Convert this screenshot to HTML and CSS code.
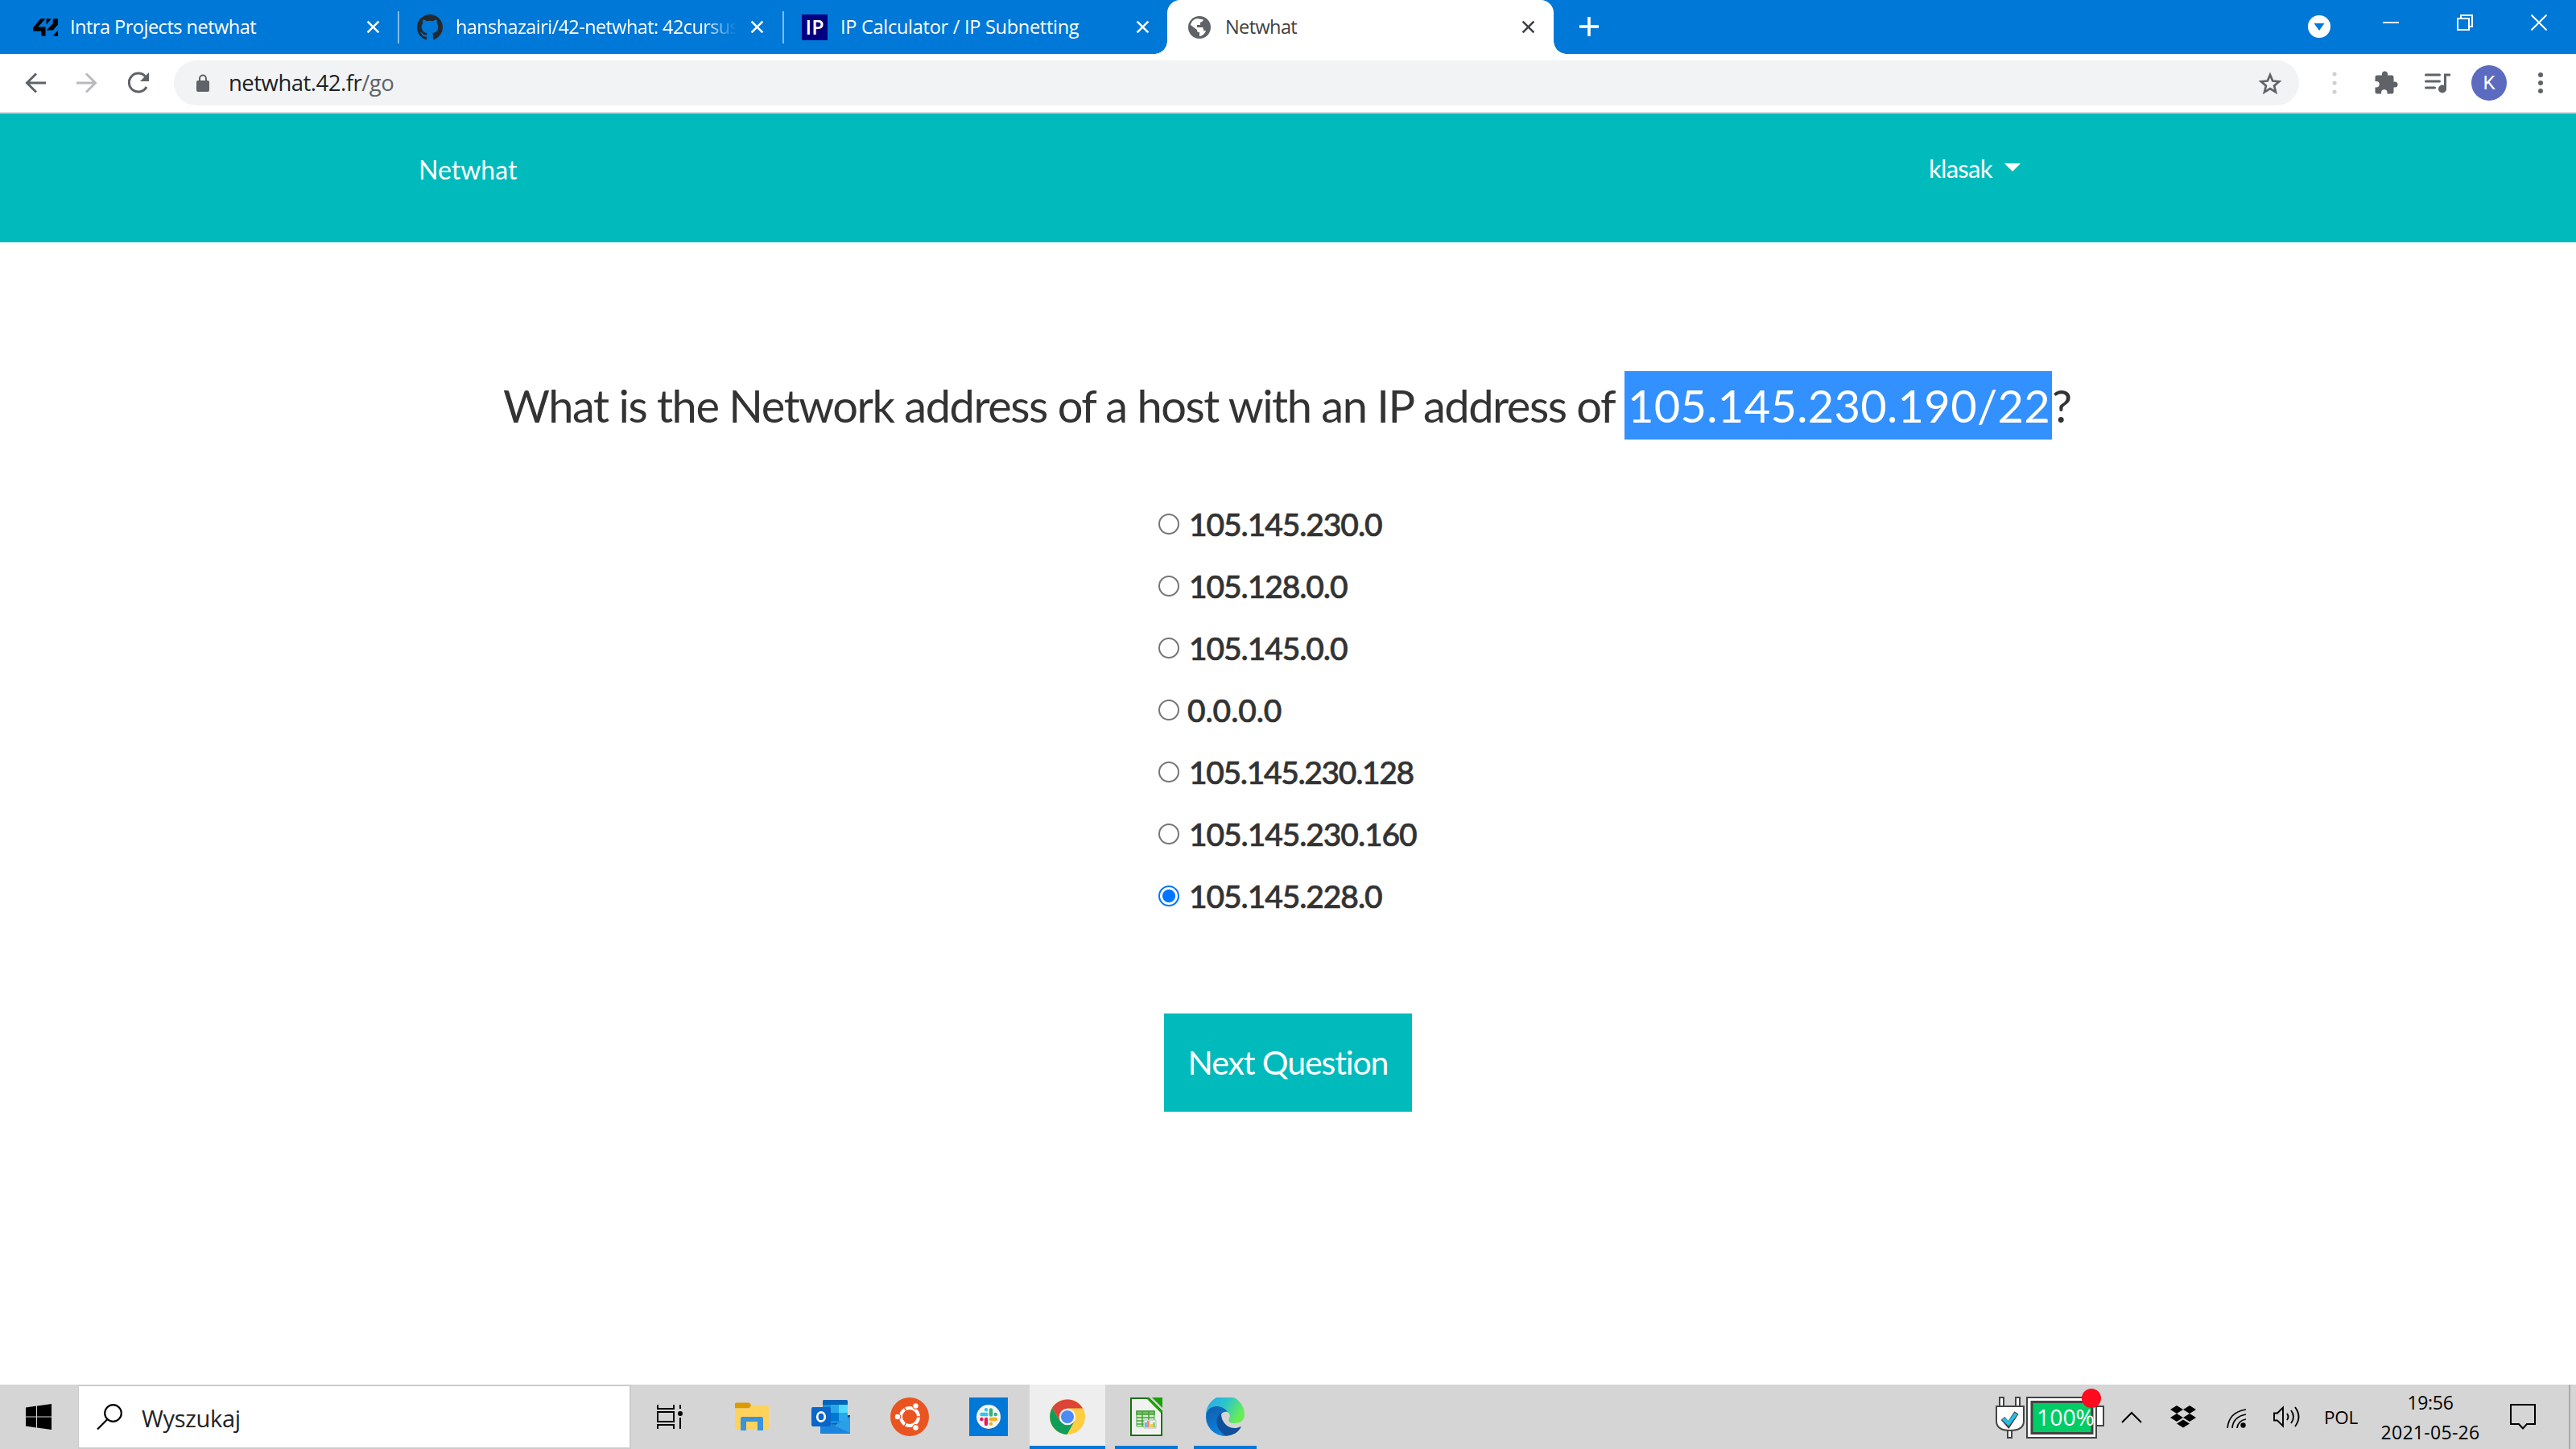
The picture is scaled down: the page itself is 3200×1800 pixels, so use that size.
FILE: index.html
```html
<!DOCTYPE html>
<html lang="pl">
<head>
<meta charset="utf-8">
<title>Netwhat</title>
<link rel="stylesheet" href="styles.css">
</head>
<body>
<div class="screen">
  <div class="tabstrip">
    <div class="tab tab-first">
      <svg class="fav42" viewBox="0 0 30 21"><path d="M9 0h6L6 10h9v11h-5v-6H0v-4zM16 0h6l-6 7zM24 0h6v7l-6 7h-8l8-8zM30 14v7h-6z" fill="#000"/></svg>
      <span class="tab-title t1">Intra Projects netwhat</span>
      <svg class="x" viewBox="0 0 16 16"><path d="M1.5 1.5l13 13M14.500 1.500l-13 13"/></svg>
    </div>
    <div class="tab tab-second">
      <svg class="icon32" viewBox="0 0 16 16"><path fill="#24292e" d="M8 0C3.580 0 0 3.580 0 8c0 3.540 2.290 6.530 5.470 7.590.4.070.55-.17.55-.38 0-.19-.01-.82-.01-1.490-2.010.37-2.530-.49-2.690-.94-.09-.23-.48-.94-.82-1.130-.28-.15-.68-.52-.01-.53.63-.01 1.080.58 1.230.82.72 1.210 1.870.87 2.330.66.070-.52.28-.87.51-1.070-1.780-.2-3.640-.89-3.640-3.950 0-.87.31-1.590.82-2.150-.08-.2-.36-1.020.08-2.120 0 0 .67-.21 2.200.82A7.600 7.600 0 0 1 8 3.860c.68 0 1.360.09 2 .27 1.530-1.040 2.200-.82 2.200-.82.44 1.100.16 1.920.08 2.120.51.56.82 1.270.82 2.150 0 3.070-1.870 3.750-3.650 3.950.29.25.54.73.54 1.480 0 1.070-.01 1.930-.01 2.200 0 .21.15.46.55.38A8.010 8.010 0 0 0 16 8c0-4.420-3.580-8-8-8z"/></svg>
      <span class="tab-title t2">hanshazairi/42-netwhat: 42cursus</span>
      <svg class="x" viewBox="0 0 16 16"><path d="M1.500 1.500l13 13M14.500 1.500l-13 13"/></svg>
    </div>
    <div class="tab tab-third">
      <span class="fav-ip">IP</span>
      <span class="tab-title t3">IP Calculator / IP Subnetting</span>
      <svg class="x" viewBox="0 0 16 16"><path d="M1.500 1.500l13 13M14.500 1.500l-13 13"/></svg>
    </div>
    <div class="tab tab-active">
      <svg class="globe" viewBox="0 0 28 28"><circle cx="14" cy="14" r="14" fill="#5f6368"/><path fill="#fff" d="M12 3c2 1 5 .5 7 1.500-1 2-2 2.500-4 3.500v3h-4v3h7c1 1 1 2 1 4h3c-1 3.500-4 6.500-8 7v-5h-2c-1-1-1-2-1-3l-8-6c1-5 5-8 9-8z"/></svg>
      <span class="tab-title t4">Netwhat</span>
      <svg class="x dark" viewBox="0 0 16 16"><path d="M1.500 1.500l13 13M14.500 1.500l-13 13"/></svg>
    </div>
    <svg class="plus" viewBox="0 0 24 24"><path d="M12 0v24M0 12h24" stroke="#fff" stroke-width="3.600"/></svg>
    <div class="window-controls">
      <svg class="w-down" viewBox="0 0 28 28"><circle cx="14" cy="14" r="14" fill="#fff"/><path d="M7.500 10h13L14 19z" fill="#0078d7"/></svg>
      <svg class="w-btn" viewBox="0 0 20 20"><path d="M0 10h20"/></svg>
      <svg class="w-btn" viewBox="0 0 20 20"><path d="M1 5h14v14H1zM5 5V1h14v14h-4"/></svg>
      <svg class="w-btn" viewBox="0 0 20 20"><path d="M.5.5l19 19M19.500.5l-19 19"/></svg>
    </div>
  </div>

  <div class="toolbar">
    <svg class="nav back" viewBox="0 0 26 26"><path d="M26 13H3M14 1.500L2.500 13 14 24.500"/></svg>
    <svg class="nav forward" viewBox="0 0 26 26"><path d="M0 13h23M12 1.500L23.500 13 12 24.500"/></svg>
    <svg class="nav reload" viewBox="0 0 28 28"><path d="M24 19A11.500 11.500 0 1 1 22.500 6"/><path d="M27 1v11H16z" fill="#5f6368" stroke="none"/></svg>
    <div class="omnibox">
      <svg class="lock" viewBox="0 0 16 22"><path d="M4 9V5.500a4 4 0 0 1 8 0V9" fill="none" stroke="#5f6368" stroke-width="2"/><rect y="8" width="16" height="14" rx="2" fill="#5f6368"/></svg>
      <span class="url">netwhat.42.fr<span class="path">/go</span></span>
      <svg class="star" viewBox="0 0 30 29"><path d="M15 4l3.200 7.500 8 .7-6.100 5.300 1.900 8L15 21.200 8 25.500l1.900-8-6.100-5.300 8-.7z" fill="none" stroke="#5f6368" stroke-width="2.700"/></svg>
    </div>
    <svg class="dots faint" viewBox="0 0 6 28"><circle cx="3" cy="3" r="2.600"/><circle cx="3" cy="14" r="2.600"/><circle cx="3" cy="25" r="2.600"/></svg>
    <svg class="puzzle" viewBox="0 0 29 29"><path fill="#5f6368" d="M9 5.500V4a3.500 3.500 0 0 1 7 0v1.500h5q2.500 0 2.500 2.500v5.500h1.500a3.500 3.500 0 0 1 0 7h-1.500V26q0 2.500-2.500 2.500h-5.500v-1.500a3.700 3.700 0 0 0-7.400 0v1.500H3Q.5 28.500.5 26v-5.500H2a3.700 3.700 0 0 0 0-7.400H.5V8Q.5 5.500 3 5.500z"/></svg>
    <svg class="music" viewBox="0 0 32 25"><path d="M1.500 2h17M1.500 10h17M1.500 18h11M25.500 19V2H31" fill="none" stroke="#5f6368" stroke-width="3" stroke-linecap="round"/><circle cx="22" cy="19.500" r="5" fill="#5f6368"/></svg>
    <span class="avatar">K</span>
    <svg class="dots" viewBox="0 0 6 28"><circle cx="3" cy="4" r="3"/><circle cx="3" cy="14" r="3"/><circle cx="3" cy="24" r="3"/></svg>
  </div>

  <header class="site-header">
    <span class="brand">Netwhat</span>
    <span class="user">klasak</span>
    <span class="caret"></span>
  </header>

  <main class="quiz">
    <h1 class="question"><span class="q-text">What is the Network address of a host with an IP address of</span><span class="selected">105.145.230.190/22</span><span class="q-mark">?</span></h1>
    <div class="options">
      <label class="option"><span class="radio"></span><span class="o1">105.145.230.0</span></label>
      <label class="option"><span class="radio"></span><span class="o2">105.128.0.0</span></label>
      <label class="option"><span class="radio"></span><span class="o3">105.145.0.0</span></label>
      <label class="option"><span class="radio"></span><span class="o4">0.0.0.0</span></label>
      <label class="option"><span class="radio"></span><span class="o5">105.145.230.128</span></label>
      <label class="option"><span class="radio"></span><span class="o6">105.145.230.160</span></label>
      <label class="option"><span class="radio checked"></span><span class="o7">105.145.228.0</span></label>
    </div>
    <button class="next">Next Question</button>
  </main>

  <footer class="taskbar">
    <div class="start"><svg class="winlogo" viewBox="0 0 32 32"><path d="M0 4.500l13-1.900V15.500H0zM14 2.400L32 0v15.500H14zM0 16.500h13v12.900L0 27.500zM14 16.500h18V32l-18-2.400z"/></svg></div>
    <div class="search">
      <svg class="lens" viewBox="0 0 32 32"><circle cx="20.500" cy="11.500" r="10.300"/><path d="M13.500 19L1 31.500"/></svg>
      <span>Wyszukaj</span>
    </div>
    <div class="task taskview"><svg class="i32" viewBox="0 0 32 32"><path d="M1 1v5h20V1M1 31v-5h20v5M1 10h20v12H1zM29 1v5M29 17v14" fill="none" stroke="#000" stroke-width="2"/><circle cx="29" cy="12" r="3"/></svg></div>
    <div class="task"><svg class="explorer" viewBox="0 0 42 36"><path d="M0 2q0-1.500 1.500-1.500H17q1.500 0 3 3t-3 4H0z" fill="#dd9a00"/><path d="M0 7.500h16q2 0 4-3.500h20q2 0 2 2v26q0 2-2 2H2q-2 0-2-2z" fill="#ffd25c"/><path d="M7 35V20q0-2 2-2h24q2 0 2 2v15h-7V24H14v11z" fill="#3a94dc"/></svg></div>
    <div class="task"><svg class="i48" viewBox="0 0 48 48"><path d="M12 22h36v20q0 3-2 3H13q-2 0-2-2z" fill="#0a4a87"/><path d="M14 5q0-2 2-2h27q2 0 2 2v27H14z" fill="#1490df"/><path d="M14 5q0-2 2-2h27q2 0 2 2v4H14z" fill="#0364b8"/><path d="M24 9h10v10H24z" fill="#28a8ea"/><path d="M34 9h11v10H34z" fill="#50d9ff"/><path d="M24 19h10v10H24z" fill="#0078d4"/><path d="M34 19h11v10H34z" fill="#28a8ea"/><path d="M48 24L28 35l20 10z" fill="#35a9ee"/><path d="M11 26l37 18q0 1-2 1H13q-2 0-2-2z" fill="#1a85dc"/><path d="M22 31l26 13V24L30 34z" fill="#2b9fe8"/><rect y="12" width="24" height="24" rx="2" fill="#0a66c8"/><ellipse cx="12" cy="24" rx="4.800" ry="5.600" fill="none" stroke="#fff" stroke-width="2.700"/></svg></div>
    <div class="task"><svg class="i48" viewBox="0 0 48 48"><circle cx="24" cy="24" r="24" fill="#e95420"/><circle cx="24" cy="24" r="11" fill="none" stroke="#fff" stroke-width="4"/><path d="M31 24h8M20.500 18l-4-7M20.500 30l-4 7" stroke="#e95420" stroke-width="1.500"/><g fill="#fff" stroke="#e95420" stroke-width="1.200"><circle cx="9" cy="24" r="3.800"/><circle cx="31.500" cy="10.500" r="3.800"/><circle cx="31.500" cy="37.500" r="3.800"/></g></svg></div>
    <div class="task"><svg class="i48" viewBox="0 0 48 48"><path d="M0 0h48v48H0z" fill="#0078d7"/><circle cx="24" cy="24.500" r="15" fill="#085ba5"/><circle cx="24" cy="24" r="15" fill="#f5f5f5"/><g fill="none" stroke-width="4.400" stroke-linecap="round"><path d="M15.500 21h6M21 15.200v.1" stroke="#36c5f0"/><path d="M27 15.500v6M32.700 21h.1" stroke="#2eb67d"/><path d="M21 27v6M15.300 27h.1" stroke="#e01e5a"/><path d="M27 27h6M27 32.700v.1" stroke="#ecb22e"/></g></svg></div>
    <div class="task running current"><svg class="i48" viewBox="0 0 48 48"><circle cx="24" cy="24" r="22" fill="#ffcd40"/><path d="M5 13A22.200 22.200 0 0 1 43 13.500H24L14.500 29z" fill="#db4437"/><path d="M5 13A22.200 22.200 0 0 0 23.500 46l9.500-17-9 5-9.500-5z" fill="#0f9d58"/><circle cx="24" cy="24" r="10.300" fill="#f3f3f3"/><circle cx="24" cy="24" r="8" fill="#4c8bf5"/></svg></div>
    <div class="task running"><svg class="i48" viewBox="0 0 48 48"><path d="M5 1h22l16 16v30H5z" fill="#fff" stroke="#18700b" stroke-width="2"/><path d="M7 3h19l15 15v26H7z" fill="#f1f1f1"/><path d="M31 0h13v13z" fill="#18a303"/><path d="M26 1l17 17" stroke="#18a303" stroke-width="3"/><path d="M12 17h22v19H12z" fill="#d9f2d3" stroke="#43a336"/><path d="M12 17h22v4H12zM12 25h22M12 29h22M12 33h22M19 17v19M27 17v19" fill="#78bf6b" stroke="#43a336" stroke-width="1.500"/><path d="M21 28h15v10H21z" fill="#eee" stroke="#bbb"/><path d="M22 31h3v6h-3z" fill="#72b5e8"/><path d="M25 29h3v8h-3z" fill="#f28f66"/><path d="M29 33h3v4h-3z" fill="#fcc84a"/><path d="M32 31h3v6h-3z" fill="#8bd980"/></svg></div>
    <div class="task running"><svg class="i48" viewBox="0 0 48 48"><defs><linearGradient id="sky" x1="0" y1="0" x2="1" y2=".45"><stop offset="0" stop-color="#2aa5f0"/><stop offset=".5" stop-color="#2ac3cf"/><stop offset="1" stop-color="#69ed55"/></linearGradient><linearGradient id="sea" x1="0" y1="0" x2=".5" y2="1"><stop offset="0" stop-color="#105da8"/><stop offset="1" stop-color="#0a84e4"/></linearGradient></defs><path d="M0 22A24 24 0 0 1 48 21c0 8-6 11-12 11-7 0-9-3-7-6 2-4 0-9-7-9z" fill="url(#sky)"/><path d="M0 24C1 8 20 8 27 18c-5-1-8 1-9 6-2 8 5 18 14 22.600A24 24 0 0 1 0 24z" fill="url(#sea)"/><path d="M19 19c-9 6-7 21 5 28 9 1 16-3 20-11-7 3-13 3-19-2-4-4-6-8-6-15z" fill="#104f99"/></svg></div>
    <div class="tray">
      <svg class="battery" viewBox="0 0 136 64"><g fill="#fff" stroke="#444" stroke-width="2"><path d="M5 23V12h5v11zM25 23V12h5v11z"/><path d="M15 50h5v12h-5z"/><path d="M1 23h34v18q0 12-17 12T1 41z"/><path d="M39 12h86v50H39z"/><path d="M125 23h9v24h-9z"/></g><path d="M45 17.500h75v39H45z" fill="#0c6" stroke="#444" stroke-width="3"/><path d="M9 38l7 8L26 31" fill="none" stroke="#444" stroke-width="6"/><path d="M9.500 38.500l6.500 6L25.500 32" fill="none" stroke="#1bc3ec" stroke-width="4"/><text class="pct" x="51" y="46.500" textLength="72" lengthAdjust="spacingAndGlyphs">100%</text><circle cx="119" cy="13" r="12" fill="#ff0a1e"/></svg>
      <svg class="chev" viewBox="0 0 26 15"><path d="M1 14L13 2l12 12" fill="none" stroke="#000" stroke-width="2"/></svg>
      <svg class="dropbox" viewBox="0 0 32 28"><path d="M8 0l8 5-8 5-8-5zM24 0l8 5-8 5-8-5zM8 10l8 5-8 5-8-5zM24 10l8 5-8 5-8-5zM16 17.500l8 5-8 5-8-5z"/></svg>
      <svg class="wifi" viewBox="0 0 24 24"><path d="M1 24Q3 4 24 1M7 24Q8 10 24 7M13 24q1-9 11-11" fill="none" stroke="#000" stroke-width="1.700"/><circle cx="20.500" cy="20.500" r="3.200"/></svg>
      <svg class="speaker" viewBox="0 0 34 28"><path d="M1 9.500h4l7-7v23l-7-7H1zM17 10q3 4 0 8M22 6q6 8 0 16M27 2q9 12 0 24" fill="none" stroke="#000" stroke-width="1.900"/></svg>
      <span class="lang">POL</span>
      <div class="clock"><span class="time">19:56</span><span class="date">2021-05-26</span></div>
      <svg class="i32 note" viewBox="0 0 32 32"><path d="M1 1h30v24H21l-5 5.500-5-5.500H1z" fill="none" stroke="#000" stroke-width="2"/></svg>
      <span class="show-desktop"></span>
    </div>
  </footer>
</div>
</body>
</html>
```
FILE: styles.css
```css
* { box-sizing: border-box; }
body { margin: 0; background: #fff; font-family: "Open Sans", "Noto Sans", sans-serif; }
svg { display: block; flex: none; }
.screen { width: 3200px; height: 1800px; display: flex; flex-direction: column; overflow: hidden; }

/* tab strip */
.tabstrip { height: 67px; flex: none; background: #0078d7; display: flex; color: #fff; font-size: 23.500px; }
.tab { display: flex; align-items: center; position: relative; height: 67px; flex: none; }
.tab-first { width: 496px; padding-left: 41px; }
.tab-second { width: 478px; padding-left: 22px; }
.tab-third { width: 476px; padding-left: 22px; }
.tab-first::after, .tab-second::after { content: ""; position: absolute; right: 0; top: 14px; width: 2px; height: 40px; background: #80bbeb; }
.tab-title { white-space: nowrap; overflow: hidden; flex: none; line-height: 36px; margin-top: -2px; }
.t1 { margin-left: 15px; width: 368px; letter-spacing: -0.5px; }
.t2 { margin-left: 16px; width: 349px; margin-right: 17px; letter-spacing: -0.6px; mask-image: linear-gradient(to right, #000 88%, transparent); }
.t3 { margin-left: 16px; width: 367px; letter-spacing: -0.27px; }
.t4 { margin-left: 18px; width: 368px; letter-spacing: -0.6px; color: #3c4043; }
.x { width: 17px; height: 17px; fill: none; stroke: #fff; stroke-width: 2.400; }
.x.dark { stroke: #3c4043; }
.fav42 { width: 31px; height: 22px; }
.icon32 { width: 32px; height: 32px; }
.fav-ip { width: 32px; height: 32px; background: #000080; color: #fff; font: 600 25px/31px "Open Sans", sans-serif; text-align: center; }
.tab-active { width: 480px; padding-left: 26px; background: #fff; border-radius: 16px 16px 0 0; }
.tab-active::before, .tab-active::after { content: ""; position: absolute; bottom: 0; width: 16px; height: 16px; }
.tab-active::before { left: -16px; background: radial-gradient(circle at 0 0, transparent 15.500px, #fff 16px); }
.tab-active::after { right: -16px; background: radial-gradient(circle at 100% 0, transparent 15.500px, #fff 16px); }
.globe { width: 28px; height: 28px; }
.plus { width: 24px; height: 24px; margin: 21px 0 0 32px; }
.window-controls { margin-left: auto; display: flex; padding-right: 36px; }
.w-down { width: 28px; height: 28px; margin: 19px 65px 0 0; }
.w-btn { width: 20px; height: 20px; margin: 18px 0 0 72px; fill: none; stroke: #fff; stroke-width: 2; }
.w-down + .w-btn { margin-left: 0; }

/* toolbar */
.toolbar { height: 74px; flex: none; display: flex; align-items: center; background: #fff; border-bottom: 2px solid #d8dcdf; }
.nav { width: 26px; height: 26px; fill: none; stroke: #5f6368; stroke-width: 3; }
.back { margin-left: 31px; }
.forward { margin-left: 38px; stroke: #bababc; }
.reload { width: 28px; height: 28px; margin-left: 37px; }
.omnibox { width: 2640px; height: 56px; margin-left: 30px; border-radius: 28px; background: #f1f3f4; display: flex; align-items: center; padding: 0 21px 0 28px; }
.lock { width: 16px; height: 22px; }
.url { margin-left: 24px; font-size: 27.500px; line-height: 40px; letter-spacing: -0.500px; color: #202124; }
.path { color: #5f6368; }
.star { width: 30px; height: 29px; margin-left: auto; }
.dots { width: 6px; height: 28px; fill: #5f6368; margin-left: 39px; }
.dots.faint { fill: #d0d0d0; margin-left: 41px; }
.puzzle { width: 29px; height: 29px; margin: -2px 0 0 47px; }
.music { width: 32px; height: 25px; margin-left: 33px; }
.avatar { width: 44px; height: 44px; margin-left: 26px; border-radius: 50%; background: #5c6bc0; color: #fff; font: 24px/44px Roboto, sans-serif; text-align: center; }

/* page */
.site-header { height: 160px; flex: none; background: #00babc; color: #fff; font: 32px/40px Lato, sans-serif; display: flex; align-items: flex-start; }
.brand { width: 1876px; margin: 50px 0 0 520px; letter-spacing: 0; }
.user { margin-top: 48px; width: 94px; font-size: 31px; letter-spacing: -0.700px; }
.caret { margin-top: 62px; border: 10px solid transparent; border-top-color: #fff; border-bottom: 0; }
.quiz { flex: 1; display: flex; flex-direction: column; align-items: flex-start; font-family: Lato, sans-serif; color: #333; }
.question { margin: 160px 0 0 625px; font-size: 56px; line-height: 85px; font-weight: 400; display: flex; white-space: nowrap; }
.q-text { width: 1393px; letter-spacing: -1.480px; }
.selected { width: 531px; background: #3390ff; color: #fff; padding-left: 4px; letter-spacing: 0.300px; }
.options { margin: 66px 0 0 1439px; }
.option { height: 77px; display: flex; align-items: center; font-size: 39px; line-height: 50px; font-weight: 500; white-space: nowrap; -webkit-text-stroke: 0.700px #333; letter-spacing: -1.100px; }
.radio { width: 26px; height: 26px; border: 2px solid #767676; border-radius: 50%; margin-right: 12px; flex: none; }
.radio.checked { border-color: #0075ff; background: radial-gradient(circle, #0075ff 7.500px, #fff 8.500px); }
.o4 { margin-left: -2px; letter-spacing: -0.100px; }
.o5 { letter-spacing: -1.350px; }
.next { margin: 108px 0 0 1446px; width: 308px; height: 122px; border: 0; background: #00babc; color: #fff; font: 41px/50px Lato, sans-serif; padding: 0; letter-spacing: -1.100px; white-space: nowrap; }

/* taskbar */
.taskbar { height: 80px; flex: none; background: #d5d5d5; display: flex; }
.start { width: 97px; padding: 24px 0 0 32px; }
.winlogo, .i32 { width: 32px; height: 32px; }
.search { width: 687px; height: 80px; background: #fff; border: 2px solid #ccc; border-width: 2px 2px 2px 1px; display: flex; align-items: center; padding-left: 22px; font-size: 29px; color: #222; letter-spacing: -0.300px; }
.search span { margin: 2px 0 0 24px; }
.lens { width: 32px; height: 32px; fill: none; stroke: #000; stroke-width: 2.200; }
.task { width: 94px; height: 80px; margin-right: 4px; display: flex; align-items: center; justify-content: center; position: relative; }
.taskview { margin: 0 8px 0 1px; }
.i48 { width: 48px; height: 48px; }
.explorer { width: 42px; height: 36px; }
.running::after { content: ""; position: absolute; left: 8px; right: 8px; bottom: 0; height: 4px; background: #0078d7; }
.current { background: #eee; }
.current::after { left: 0; right: 0; }
.tray { margin-left: auto; display: flex; color: #000; font-size: 23px; }
.battery { width: 136px; height: 64px; margin-top: 4px; }
.pct { font: 28px "Open Sans", sans-serif; fill: #fff; }
.chev { width: 26px; height: 15px; margin: 33px 0 0 20px; }
.dropbox { width: 32px; height: 28px; margin: 26px 0 0 35px; }
.wifi { width: 24px; height: 24px; margin: 30px 0 0 38px; }
.speaker { width: 34px; height: 28px; margin: 26px 0 0 34px; }
.lang { width: 44px; margin: 25px 0 0 29px; line-height: 32px; font-size: 22.500px; letter-spacing: -0.300px; }
.clock { width: 130px; margin: 4px 0 0 23px; display: flex; flex-direction: column; align-items: center; line-height: 37px; white-space: nowrap; }
.time { letter-spacing: -0.300px; }
.date { letter-spacing: 0.300px; }
.note { margin: 24px 0 0 34px; }
.show-desktop { width: 9px; margin-left: 41px; border-left: 2px solid #aaa; }
```
